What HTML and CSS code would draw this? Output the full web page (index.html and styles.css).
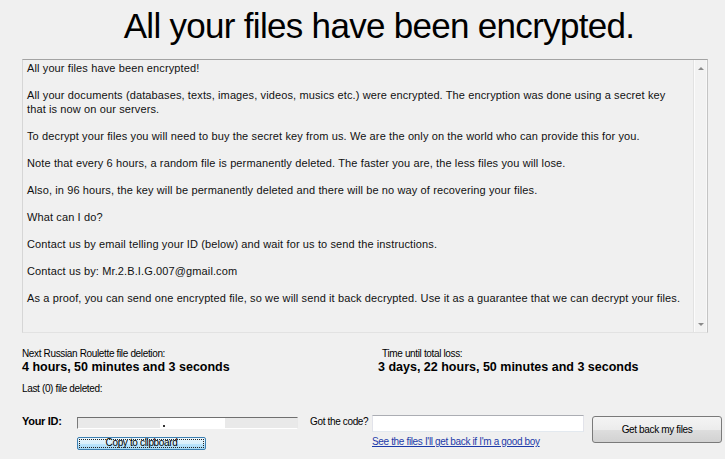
FILE: index.html
```html
<!DOCTYPE html>
<html>
<head>
<meta charset="utf-8">
<link rel="stylesheet" href="styles.css">
</head>
<body>
<div class="window">
  <h1 class="title">All your files have been encrypted.</h1>
  <div class="notebox">
    <div class="notetext">
      <p>All your files have been encrypted!</p>
      <p>All your documents (databases, texts, images, videos, musics etc.) were encrypted. The encryption was done using a secret key<br>that is now on our servers.</p>
      <p>To decrypt your files you will need to buy the secret key from us. We are the only on the world who can provide this for you.</p>
      <p>Note that every 6 hours, a random file is permanently deleted. The faster you are, the less files you will lose.</p>
      <p>Also, in 96 hours, the key will be permanently deleted and there will be no way of recovering your files.</p>
      <p>What can I do?</p>
      <p>Contact us by email telling your ID (below) and wait for us to send the instructions.</p>
      <p>Contact us by: Mr.2.B.I.G.007@gmail.com</p>
      <p>As a proof, you can send one encrypted file, so we will send it back decrypted. Use it as a guarantee that we can decrypt your files.</p>
    </div>
    <div class="scrollbar">
      <span class="arrow arrow-up"></span>
      <span class="arrow arrow-down"></span>
    </div>
  </div>
  <div class="timers">
    <div class="timer">
      <div class="label">Next Russian Roulette file deletion:</div>
      <div class="count">4 hours, 50 minutes and 3 seconds</div>
      <div class="label last">Last (0) file deleted:</div>
    </div>
    <div class="timer timer-right">
      <div class="label">Time until total loss:</div>
      <div class="count">3 days, 22 hours, 50 minutes and 3 seconds</div>
    </div>
  </div>
  <div class="actions">
    <div class="idlabel">Your ID:</div>
    <div class="idcol">
      <div class="idfield"><span class="redact"><span class="dot"></span></span></div>
      <button class="copy">Copy to clipboard</button>
    </div>
    <div class="codelabel">Got the code?</div>
    <div class="codecol">
      <input class="codeinput" type="text">
      <a class="goodboy" href="#">See the files I'll get back if I'm a good boy</a>
    </div>
    <button class="getback">Get back my files</button>
  </div>
</div>
</body>
</html>
```
FILE: styles.css
```css
* { box-sizing: border-box; }
html, body { margin: 0; padding: 0; }
body {
  background: #f0f0f0;
  font-family: "Liberation Sans", Arial, sans-serif;
  color: #000;
  width: 725px;
  height: 459px;
  overflow: hidden;
}
.window { padding-left: 22px; }
.title {
  margin: 0;
  padding: 8px 0 0 28px;
  width: 686px;
  height: 59px;
  font-size: 35px;
  line-height: 35px;
  font-weight: normal;
  letter-spacing: -0.7px;
  text-align: center;
}
.notebox {
  display: flex;
  width: 686px;
  height: 274px;
  border: 1px solid;
  border-color: #a3a3a3 #c4c4c4 #e2e2e2 #d6d6d6;
  background: #f0f0f0;
}
.notetext {
  flex: 1;
  padding: 2px 5px 0 4px;
  font-size: 11px;
  line-height: 13.5px;
  letter-spacing: 0.12px;
  color: #111;
}
.notetext p { margin: 0 0 13.5px; }
.scrollbar {
  width: 14px;
  border-left: 1px solid #e2e2e2;
  box-shadow: inset 1px 0 #fbfbfb, inset -1px 0 #f8f8f8;
  background: #f2f2f2;
  display: flex;
  flex-direction: column;
  justify-content: space-between;
  align-items: center;
  padding: 7px 0 6px;
}
.arrow {
  width: 0;
  height: 0;
  border-left: 3px solid transparent;
  border-right: 3px solid transparent;
}
.arrow-up { border-bottom: 3px solid #8a8a8a; }
.arrow-down { border-top: 3px solid #8a8a8a; }
.timers { display: flex; margin-top: 13.5px; }
.timer { width: 360px; flex-shrink: 0; }
.timer-right { flex: 1; width: auto; }
.label, .codelabel, .copy, .goodboy, .getback {
  font-family: "Liberation Sans", Arial, sans-serif;
  font-size: 10px;
  letter-spacing: -0.35px;
}
.label { line-height: 13px; }
.count {
  font-size: 12.5px;
  font-weight: bold;
  line-height: 15px;
}
.timer-right .count { margin-left: -4px; }
.last { margin-top: 7px; }
.actions {
  display: flex;
  align-items: flex-start;
  margin-top: 20.5px;
}
.idlabel {
  width: 55px;
  flex-shrink: 0;
  font-size: 11px;
  font-weight: bold;
  letter-spacing: -0.3px;
  line-height: 13px;
}
.idcol { width: 221px; flex-shrink: 0; }
.idfield {
  margin-top: 1.5px;
  height: 12px;
  border: 1px solid;
  border-color: #6f6f6f #e8e8e8 #ffffff #7a7a7a;
  background: #e9e9e9;
  padding-left: 82px;
  display: flex;
}
.redact {
  width: 65px;
  height: 100%;
  background: #fff;
  position: relative;
}
.dot {
  position: absolute;
  left: 3px;
  bottom: 1px;
  width: 2px;
  height: 2px;
  background: #333;
}
.copy {
  display: block;
  margin-top: 8px;
  width: 129px;
  height: 13px;
  padding: 0;
  border: 1px solid #3c7fb1;
  border-radius: 2px;
  background: linear-gradient(#eaf6fd, #d9f0fc 50%, #bee6fd 50%, #a7d9f5);
  outline: 1px dotted #222;
  outline-offset: -3px;
  line-height: 10px;
  color: #000;
}
.codelabel {
  margin-left: 12px;
  width: 62px;
  flex-shrink: 0;
  line-height: 13px;
}
.codecol { width: 212px; flex-shrink: 0; }
.codeinput {
  display: block;
  margin: 0;
  width: 212px;
  height: 17px;
  border: 1px solid;
  border-color: #abadb3 #e2e3ea #e3e9ef #e2e3ea;
  background: #fff;
  padding: 0;
}
.goodboy {
  display: block;
  margin-top: 3px;
  line-height: 13px;
  color: #1c3aa9;
  text-decoration: underline;
  white-space: nowrap;
}
.getback {
  flex-shrink: 0;
  margin: 1px 0 0 8px;
  width: 130px;
  height: 27px;
  padding: 0;
  border: 1px solid #7a7a7a;
  border-radius: 3px;
  background: linear-gradient(#f4f4f4, #ececec 50%, #dedede 50%, #d2d2d2);
  color: #000;
}
```
